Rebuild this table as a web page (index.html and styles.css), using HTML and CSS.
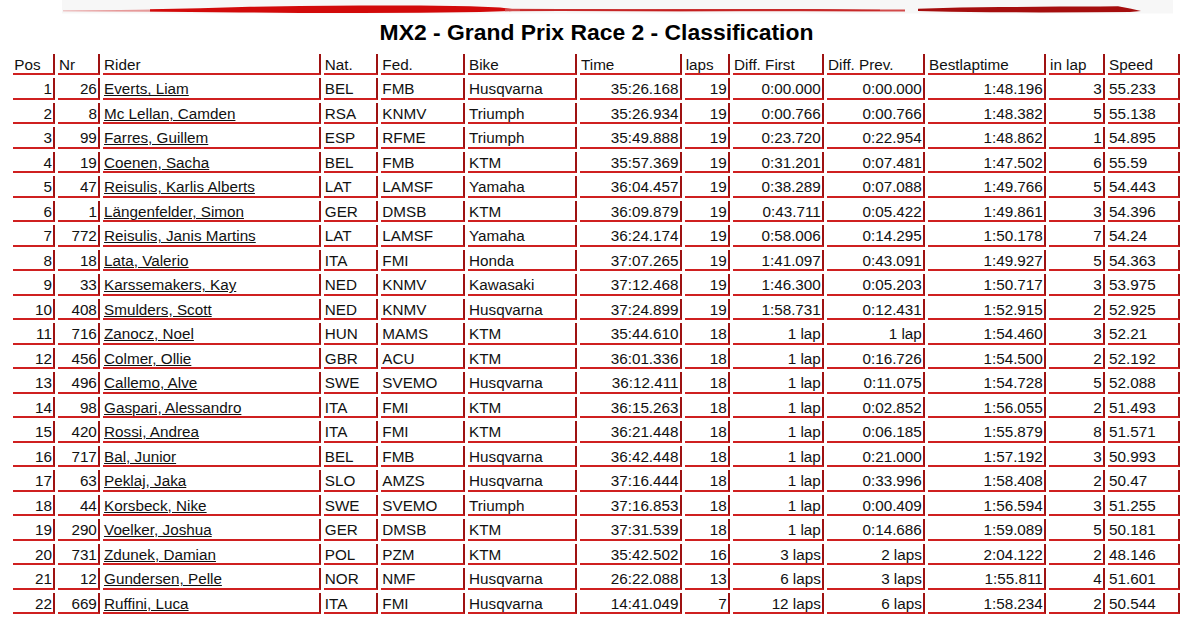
FILE: index.html
```html
<!DOCTYPE html>
<html lang="en">
<head>
<meta charset="utf-8">
<title>MX2 - Grand Prix Race 2 - Classification</title>
<link rel="stylesheet" href="styles.css">
</head>
<body>
<div class="banner">
  <svg class="banner-art" width="1193" height="14" viewBox="0 0 1193 14" aria-hidden="true">
    <rect x="62" y="0" width="1111" height="13.5" fill="#f7f7f7"/>
    <path d="M63 10.4 L120 9.9 L170 9.2 L190 9.4 L190 11.6 L150 11.8 L100 11.4 L63 11.2 Z" fill="#e69a9a"/>
    <path d="M150 9.2 L200 8.2 L250 6.8 L300 6 L360 5.4 L420 5.5 L470 6.3 L500 7.6 L512 9 L512 11 L480 12 L420 12.8 L360 13.1 L300 12.9 L240 12.4 L190 12 L150 11.6 Z" fill="#d20a0a"/>
    <path d="M505 8.8 L560 9 L620 9.2 L680 9.1 L740 8.9 L800 9.1 L860 9.4 L905 9.6 L905 11.4 L860 11.5 L800 11.3 L740 11.2 L680 11.4 L620 11.3 L560 11.1 L505 11.2 Z" fill="#d24a4a"/>
    <path d="M520 9.4 L600 9.3 L680 9.4 L760 9.2 L820 9.3 L880 9.7 L880 10.8 L820 10.8 L760 10.7 L680 10.9 L600 10.8 L520 10.7 Z" fill="#c41f1f"/>
    <path d="M918 8.8 L960 7.6 L1000 7 L1060 6.6 L1100 6.6 L1118 6.2 L1130 8.4 L1141 11 L1130 12 L1090 12.3 L1040 12.4 L990 12.2 L950 11.8 L918 11 Z" fill="#a50e0e"/>
  </svg>
</div>
<h1 class="title">MX2 - Grand Prix Race 2 - Classification</h1>
<table class="results">
  <thead>
    <tr>
      <th class="c-pos">Pos</th>
      <th class="c-nr">Nr</th>
      <th class="c-rider">Rider</th>
      <th class="c-nat">Nat.</th>
      <th class="c-fed">Fed.</th>
      <th class="c-bike">Bike</th>
      <th class="c-time">Time</th>
      <th class="c-laps">laps</th>
      <th class="c-dfirst">Diff. First</th>
      <th class="c-dprev">Diff. Prev.</th>
      <th class="c-best">Bestlaptime</th>
      <th class="c-inlap">in lap</th>
      <th class="c-speed">Speed</th>
    </tr>
  </thead>
  <tbody>
    <tr><td class="r">1</td><td class="r">26</td><td><a href="#">Everts, Liam</a></td><td>BEL</td><td>FMB</td><td>Husqvarna</td><td class="r">35:26.168</td><td class="r">19</td><td class="r">0:00.000</td><td class="r">0:00.000</td><td class="r">1:48.196</td><td class="r">3</td><td>55.233</td></tr>
    <tr><td class="r">2</td><td class="r">8</td><td><a href="#">Mc Lellan, Camden</a></td><td>RSA</td><td>KNMV</td><td>Triumph</td><td class="r">35:26.934</td><td class="r">19</td><td class="r">0:00.766</td><td class="r">0:00.766</td><td class="r">1:48.382</td><td class="r">5</td><td>55.138</td></tr>
    <tr><td class="r">3</td><td class="r">99</td><td><a href="#">Farres, Guillem</a></td><td>ESP</td><td>RFME</td><td>Triumph</td><td class="r">35:49.888</td><td class="r">19</td><td class="r">0:23.720</td><td class="r">0:22.954</td><td class="r">1:48.862</td><td class="r">1</td><td>54.895</td></tr>
    <tr><td class="r">4</td><td class="r">19</td><td><a href="#">Coenen, Sacha</a></td><td>BEL</td><td>FMB</td><td>KTM</td><td class="r">35:57.369</td><td class="r">19</td><td class="r">0:31.201</td><td class="r">0:07.481</td><td class="r">1:47.502</td><td class="r">6</td><td>55.59</td></tr>
    <tr><td class="r">5</td><td class="r">47</td><td><a href="#">Reisulis, Karlis Alberts</a></td><td>LAT</td><td>LAMSF</td><td>Yamaha</td><td class="r">36:04.457</td><td class="r">19</td><td class="r">0:38.289</td><td class="r">0:07.088</td><td class="r">1:49.766</td><td class="r">5</td><td>54.443</td></tr>
    <tr><td class="r">6</td><td class="r">1</td><td><a href="#">Längenfelder, Simon</a></td><td>GER</td><td>DMSB</td><td>KTM</td><td class="r">36:09.879</td><td class="r">19</td><td class="r">0:43.711</td><td class="r">0:05.422</td><td class="r">1:49.861</td><td class="r">3</td><td>54.396</td></tr>
    <tr><td class="r">7</td><td class="r">772</td><td><a href="#">Reisulis, Janis Martins</a></td><td>LAT</td><td>LAMSF</td><td>Yamaha</td><td class="r">36:24.174</td><td class="r">19</td><td class="r">0:58.006</td><td class="r">0:14.295</td><td class="r">1:50.178</td><td class="r">7</td><td>54.24</td></tr>
    <tr><td class="r">8</td><td class="r">18</td><td><a href="#">Lata, Valerio</a></td><td>ITA</td><td>FMI</td><td>Honda</td><td class="r">37:07.265</td><td class="r">19</td><td class="r">1:41.097</td><td class="r">0:43.091</td><td class="r">1:49.927</td><td class="r">5</td><td>54.363</td></tr>
    <tr><td class="r">9</td><td class="r">33</td><td><a href="#">Karssemakers, Kay</a></td><td>NED</td><td>KNMV</td><td>Kawasaki</td><td class="r">37:12.468</td><td class="r">19</td><td class="r">1:46.300</td><td class="r">0:05.203</td><td class="r">1:50.717</td><td class="r">3</td><td>53.975</td></tr>
    <tr><td class="r">10</td><td class="r">408</td><td><a href="#">Smulders, Scott</a></td><td>NED</td><td>KNMV</td><td>Husqvarna</td><td class="r">37:24.899</td><td class="r">19</td><td class="r">1:58.731</td><td class="r">0:12.431</td><td class="r">1:52.915</td><td class="r">2</td><td>52.925</td></tr>
    <tr><td class="r">11</td><td class="r">716</td><td><a href="#">Zanocz, Noel</a></td><td>HUN</td><td>MAMS</td><td>KTM</td><td class="r">35:44.610</td><td class="r">18</td><td class="r">1 lap</td><td class="r">1 lap</td><td class="r">1:54.460</td><td class="r">3</td><td>52.21</td></tr>
    <tr><td class="r">12</td><td class="r">456</td><td><a href="#">Colmer, Ollie</a></td><td>GBR</td><td>ACU</td><td>KTM</td><td class="r">36:01.336</td><td class="r">18</td><td class="r">1 lap</td><td class="r">0:16.726</td><td class="r">1:54.500</td><td class="r">2</td><td>52.192</td></tr>
    <tr><td class="r">13</td><td class="r">496</td><td><a href="#">Callemo, Alve</a></td><td>SWE</td><td>SVEMO</td><td>Husqvarna</td><td class="r">36:12.411</td><td class="r">18</td><td class="r">1 lap</td><td class="r">0:11.075</td><td class="r">1:54.728</td><td class="r">5</td><td>52.088</td></tr>
    <tr><td class="r">14</td><td class="r">98</td><td><a href="#">Gaspari, Alessandro</a></td><td>ITA</td><td>FMI</td><td>KTM</td><td class="r">36:15.263</td><td class="r">18</td><td class="r">1 lap</td><td class="r">0:02.852</td><td class="r">1:56.055</td><td class="r">2</td><td>51.493</td></tr>
    <tr><td class="r">15</td><td class="r">420</td><td><a href="#">Rossi, Andrea</a></td><td>ITA</td><td>FMI</td><td>KTM</td><td class="r">36:21.448</td><td class="r">18</td><td class="r">1 lap</td><td class="r">0:06.185</td><td class="r">1:55.879</td><td class="r">8</td><td>51.571</td></tr>
    <tr><td class="r">16</td><td class="r">717</td><td><a href="#">Bal, Junior</a></td><td>BEL</td><td>FMB</td><td>Husqvarna</td><td class="r">36:42.448</td><td class="r">18</td><td class="r">1 lap</td><td class="r">0:21.000</td><td class="r">1:57.192</td><td class="r">3</td><td>50.993</td></tr>
    <tr><td class="r">17</td><td class="r">63</td><td><a href="#">Peklaj, Jaka</a></td><td>SLO</td><td>AMZS</td><td>Husqvarna</td><td class="r">37:16.444</td><td class="r">18</td><td class="r">1 lap</td><td class="r">0:33.996</td><td class="r">1:58.408</td><td class="r">2</td><td>50.47</td></tr>
    <tr><td class="r">18</td><td class="r">44</td><td><a href="#">Korsbeck, Nike</a></td><td>SWE</td><td>SVEMO</td><td>Triumph</td><td class="r">37:16.853</td><td class="r">18</td><td class="r">1 lap</td><td class="r">0:00.409</td><td class="r">1:56.594</td><td class="r">3</td><td>51.255</td></tr>
    <tr><td class="r">19</td><td class="r">290</td><td><a href="#">Voelker, Joshua</a></td><td>GER</td><td>DMSB</td><td>KTM</td><td class="r">37:31.539</td><td class="r">18</td><td class="r">1 lap</td><td class="r">0:14.686</td><td class="r">1:59.089</td><td class="r">5</td><td>50.181</td></tr>
    <tr><td class="r">20</td><td class="r">731</td><td><a href="#">Zdunek, Damian</a></td><td>POL</td><td>PZM</td><td>KTM</td><td class="r">35:42.502</td><td class="r">16</td><td class="r">3 laps</td><td class="r">2 laps</td><td class="r">2:04.122</td><td class="r">2</td><td>48.146</td></tr>
    <tr><td class="r">21</td><td class="r">12</td><td><a href="#">Gundersen, Pelle</a></td><td>NOR</td><td>NMF</td><td>Husqvarna</td><td class="r">26:22.088</td><td class="r">13</td><td class="r">6 laps</td><td class="r">3 laps</td><td class="r">1:55.811</td><td class="r">4</td><td>51.601</td></tr>
    <tr><td class="r">22</td><td class="r">669</td><td><a href="#">Ruffini, Luca</a></td><td>ITA</td><td>FMI</td><td>Husqvarna</td><td class="r">14:41.049</td><td class="r">7</td><td class="r">12 laps</td><td class="r">6 laps</td><td class="r">1:58.234</td><td class="r">2</td><td>50.544</td></tr>
  </tbody>
</table>
</body>
</html>
```

FILE: styles.css
```css
html, body {
  margin: 0;
  padding: 0;
  background: #ffffff;
}

body {
  font-family: "Liberation Sans", Arial, sans-serif;
  color: #111111;
}

.banner {
  height: 14px;
  overflow: hidden;
}

.banner-art {
  display: block;
}

.title {
  margin: 4.6px 0 0;
  font-size: 22.9px;
  line-height: 26px;
  font-weight: bold;
  text-align: center;
  color: #000000;
}

.results {
  margin: 6.4px 0 0 10.2px;
  border-collapse: separate;
  border-spacing: 3px;
  table-layout: fixed;
  width: 1172.8px;
  font-size: 15.25px;
}

.results th,
.results td {
  padding: 3px 1.1px 0 1.1px;
  line-height: 16.48px;
  border-right: 2px solid #9e1212;
  border-bottom: 2px solid #cf2020;
  white-space: nowrap;
  overflow: hidden;
  text-align: left;
  font-weight: normal;
  color: #111111;
}

.results td.r {
  text-align: right;
}

.results a {
  color: #111111;
  text-decoration: underline;
}

.c-pos    { width: 37.6px; }
.c-nr     { width: 37.8px; }
.c-rider  { width: 213.5px; }
.c-nat    { width: 50.4px; }
.c-fed    { width: 79.5px; }
.c-bike   { width: 104.8px; }
.c-time   { width: 97.5px; }
.c-laps   { width: 41.1px; }
.c-dfirst { width: 86.8px; }
.c-dprev  { width: 93.8px; }
.c-best   { width: 113.8px; }
.c-inlap  { width: 51.8px; }
.c-speed  { width: 67.8px; }
```
